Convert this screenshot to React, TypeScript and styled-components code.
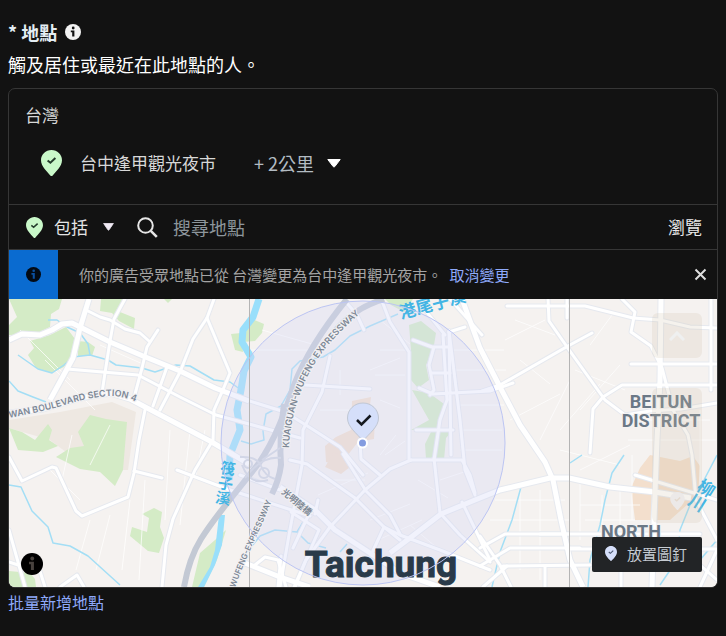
import React, { useState } from "react";
import styled, { createGlobalStyle } from "styled-components";

const GlobalStyle = createGlobalStyle`
  * { box-sizing: border-box; }
  body {
    margin: 0;
    background: #121212;
    color: #f2f2f2;
    font-family: "Noto Sans CJK TC", "Noto Sans", sans-serif;
    font-size: 18px;
    line-height: 24px;
  }
  button, input, select {
    font: inherit;
    color: inherit;
    background: none;
    border: 0;
    padding: 0;
    margin: 0;
  }
  button, select { cursor: pointer; }
  svg { display: block; flex: none; }
`;

const Page = styled.main`
  padding: 20px 8px 24px;
`;

const Heading = styled.h2`
  display: flex;
  align-items: center;
  gap: 8px;
  margin: 0;
  font-size: 18px;
  line-height: 24px;
  font-weight: 700;
  color: #e4edf3;
`;

const Description = styled.p`
  margin: 8px 0 12px;
  font-size: 18px;
  line-height: 24px;
  color: #fff;
`;

const Card = styled.section`
  border: 1px solid #363636;
  border-radius: 7px;
  overflow: hidden;
`;

const Places = styled.div`
  padding: 14px 16px 28px;
`;

const Country = styled.h3`
  margin: 0 0 23px;
  font-size: 17px;
  line-height: 24px;
  font-weight: 400;
  color: #d8d8d8;
`;

const Place = styled.div`
  display: flex;
  align-items: center;
  padding-left: 16px;
`;

const PlaceName = styled.span`
  margin: 0 38px 0 18px;
  font-size: 17px;
  color: #d8d8d8;
`;

const SelectBox = styled.span<{ $gap: number }>`
  display: inline-flex;
  align-items: center;
  gap: ${(p) => p.$gap}px;
`;

const Select = styled.select<{ $tone: string; $size: number }>`
  appearance: none;
  field-sizing: content;
  height: 24px;
  font-size: ${(p) => p.$size}px;
  line-height: 24px;
  color: ${(p) => p.$tone};
`;

const SearchRow = styled.div`
  display: flex;
  align-items: center;
  height: 46px;
  padding: 0 15px 0 17px;
  border-top: 1px solid #363636;
  border-bottom: 1px solid #363636;
`;

const Include = styled.div`
  display: flex;
  align-items: center;
  gap: 11px;
  margin-right: 23px;
`;

const SearchLabel = styled.label`
  display: flex;
  flex: 1;
  align-items: center;
  gap: 15px;
  min-width: 0;
`;

const SearchInput = styled.input`
  flex: 1;
  min-width: 0;
  height: 28px;
  outline: none;
  &::placeholder { color: #8d969c; opacity: 1; }
`;

const Browse = styled.button`
  font-size: 17px;
  color: #e8e8e8;
`;

const Notice = styled.div`
  display: flex;
  align-items: center;
  min-height: 49px;
  padding-right: 10px;
  font-size: 15px;
`;

const NoticeMark = styled.span`
  display: flex;
  align-items: center;
  justify-content: center;
  align-self: stretch;
  width: 49px;
  background: #0a6bd0;
`;

const NoticeText = styled.p`
  flex: 1;
  margin: 0 0 0 21px;
  color: #a4a4a4;
`;

const Undo = styled.button`
  margin-left: 7px;
  font-size: 15px;
  color: #8ea9fa;
`;

const MapFrame = styled.div`
  position: relative;
  height: 288px;
  overflow: hidden;
  background: #f5f2f0;
`;

const MapDrawing = styled.svg`
  width: 100%;
  height: 100%;
`;

const MapControls = styled.div`
  position: absolute;
  top: 14px;
  right: 15px;
  display: flex;
  flex-direction: column;
  gap: 30px;
`;

const ControlGroup = styled.div`
  display: flex;
  flex-direction: column;
  border-radius: 6px;
  overflow: hidden;
`;

const Control = styled.button`
  display: flex;
  align-items: center;
  justify-content: center;
  width: 50px;
  height: 45px;
  background: rgba(205, 190, 165, 0.2);
`;

const MapInfo = styled.button`
  position: absolute;
  left: 12px;
  bottom: 12px;
`;

const DropPin = styled.button`
  position: absolute;
  right: 15px;
  bottom: 15px;
  display: flex;
  align-items: center;
  gap: 10px;
  height: 35px;
  padding: 0 15px 2px 13px;
  border-radius: 2px;
  background: #222426;
  color: #c5cbd2;
  font-size: 15px;
`;

const BulkLink = styled.a`
  display: inline-block;
  margin-top: 2px;
  font-size: 16px;
  line-height: 24px;
  color: #8ea9fa;
  text-decoration: none;
`;

function InfoIcon({ size, disc, mark }: { size: number; disc: string; mark: string }) {
  return (
    <svg width={size} height={size} viewBox="0 0 16 16" aria-hidden="true">
      <circle cx="8" cy="8" r="8" fill={disc} />
      <circle cx="8.2" cy="4" r="1.4" fill={mark} />
      <path d="M5.800 6.400h3.600v6H7.200V8.200H5.800z" fill={mark} />
    </svg>
  );
}

function PinIcon({ width, fill, mark }: { width: number; fill: string; mark: string }) {
  return (
    <svg width={width} height={Math.round(width * 1.22)} viewBox="0 0 21 26" aria-hidden="true">
      <path d="M10.5 0C4.700 0 0 4.500 0 10.200c0 6.200 6.200 11.300 9.300 15.200a1.500 1.500 0 0 0 2.400 0C14.800 21.500 21 16.400 21 10.200 21 4.500 16.300 0 10.500 0z" fill={fill} />
      <path d="M6.600 10.400l2.800 2.300 5-4.600" fill="none" stroke={mark} strokeWidth="2" />
    </svg>
  );
}

function Caret({ width, height, color }: { width: number; height: number; color: string }) {
  return (
    <svg width={width} height={height} viewBox="0 0 14 9" preserveAspectRatio="none" aria-hidden="true">
      <path d="M.8.500h12.400L7.800 7.600q-.8.900-1.600 0z" fill={color} stroke={color} strokeLinejoin="round" />
    </svg>
  );
}

const parks = [
  "M9 299H62L59 309 51 314 50 327 42 331 37 334 9 335 9 325 17 317Z",
  "M101 299H122L120 312 135 318 134 329 119 321 112 313 100 311Z",
  "M30 341L50 335 66 327 75 339 73 355 64 367 51 373 36 368 28 355 34 348Z",
  "M78 341L88 342 95 347 92 356 78 356Z",
  "M9 428L22 432 35 440 48 424 52 430 49 440 58 446 43 452 18 450Z",
  "M90 415L106 419 127 422 123 470 115 486 100 472 80 469 56 457 70 448 84 446 78 432Z",
  "M154 508L162 512 160 527 164 538 159 553 148 551 130 536 132 527 147 532 149 518 142 514Z",
  "M231 334L241 333 243 352 235 350Z",
  "M250 318L264 324 262 333 255 341 243 342Z",
  "M409 325L421 321 436 333 433 351 426 365 429 380 418 388 411 380 411 350Z",
  "M412 390L429 393 444 404 443 418 436 429 454 429 446 438 444 460 426 459 425 444 432 430 411 430 429 420Z",
  "M385 299H413L404 312 391 305Z",
  "M215 540L226 530 217 560 204 587H192L200 553Z",
  "M9 571L30 573 35 579 36 587H9Z",
  "M164 299h8l-4 4z",
];

const warmAreas = [
  "M352 401L371 397 369 413 375 419 374 439 358 442 340 465 326 462 325 446 336 437 351 430Z",
  "M334 452L354 464 341 474 325 467Z",
  "M650 455L680 461 693 456 700 466 698 495 670 520 635 520 631 488 640 468Z",
];

const streams = [
  "M48 320L57 320 67 327 80 333 88 344 90 355",
  "M18 355L38 369 52 373 64 365 73 357 90 355 108 360 116 365 142 368 155 372 176 365 190 366 214 380 230 382 241 390",
  "M9 381L18 391 33 397 46 402",
  "M9 485L21 487 32 511 48 527 53 543 70 546 88 556 120 585",
  "M398 314L370 326 350 336 335 350 323 357 300 361 292 369 290 390 281 406 266 414 263 431 264 440 251 444 241 441",
  "M248 551L260 536 275 530 297 532 308 543 326 548",
  "M308 514L297 532M347 544L340 552",
  "M570 463L582 455M624 455L612 473 605 500 600 525 590 560 588 587",
  "M521 487L512 520 500 552 492 587",
  "M717 455L704 480 690 505 680 530 677 560 660 585",
  "M717 540L700 560",
];

const minorRoads = [
  "M88 311L100 317 110 320 125 329 140 333 149 341",
  "M125 299L114 319 110 341 105 373 102 393",
  "M158 330L147 347 142 368 134 398",
  "M67 369L138 375 180 397 216 415 249 424 300 438",
  "M214 299L207 318 193 339 180 372 160 410",
  "M207 318L230 373 222 392 214 410 213 440 195 470 173 519 166 545 162 587",
  "M167 367L153 406M145 410L139 440 134 473 128 497 82 516 76 511 56 468 52 467 22 481 9 457",
  "M134 471L162 478M177 470L227 489 310 516",
  "M9 530L25 587M9 562L24 567M60 587L77 575 84 587M38 565L45 587",
  "M240 398L285 412 309 427 340 447 363 475",
  "M305 385L370 389M330 356L322 392 303 430 302 465 289 535 280 587",
  "M346 302L357 315 364 330M382 301L390 322 409 352 409 459",
  "M413 340L432 347 449 347M434 347L429 365 434 390 430 395",
  "M419 388L433 394 490 391 513 383M449 331L451 455M443 335L447 400 440 420 434 460",
  "M431 373H450M416 430H453",
  "M449 331L460 420 465 470 475 495",
  "M425 310L445 335M449 332L465 327",
  "M450 299L482 335",
  "M290 460L307 464 355 498 384 527 400 535 440 550 490 570",
  "M343 454L356 475 366 491 390 515 400 534",
  "M360 440L361 459 380 475",
  "M411 460H462L470 475 475 493",
  "M411 460L390 469 365 490 330 527 306 560 295 587",
  "M400 540L384 527 371 555M434 458L440 513 460 535 490 562",
  "M462 502L490 560",
  "M291 512L319 530 294 587M318 500L315 514M281 556L278 587",
  "M240 475L280 490M309 514L293 548",
  "M255 565L265 557 278 560 286 587",
  "M507 306H585L633 318 660 320 690 327 717 328",
  "M548 299L549 321 572 354 605 400 625 415 650 411 681 409 717 403",
  "M567 299V318M592 333L568 346 500 385 482 391",
  "M631 364H717M717 385H622L603 397 593 409 590 453",
  "M622 299L635 312 631 332 651 346 662 368 673 410 688 435 692 455 696 500 717 540",
  "M540 534H700M569 549H717M503 566L590 565M635 475L717 500",
  "M545 566V587M621 565V587M711 299V390",
  "M480 536L500 565 511 587M480 548L505 534 569 534",
  "M480 566L510 548H580M483 587L507 566",
  "M700 587L717 550M700 565L717 580",
];

const mainRoads = [
  "M9 340L22 334 40 335 52 330 62 324 72 323 110 342 143 356 180 371 215 388 249 401",
  "M89 299L80 328 73 358 50 400",
  "M9 413L43 409 80 398 110 393 130 399 168 419 210 441 249 464",
  "M280 487L315 510 335 530 370 553 400 573 440 587",
  "M390 553L410 538 441 514 475 500 500 490 550 478 569 478 610 487 655 492 691 498",
  "M462 299L480 348 500 387 520 425 545 462 553 480 561 520 570 560 583 587",
  "M661 299L660 380 657 440 654 520 652 587",
  "M245 563L280 577 310 587",
];

const fineStreets = [
  "M250 350h70M262 330l50 14M370 370l30-12M320 410h36l8 18M385 455l20-14M370 520l40-16M418 480l30 18M340 370v25M380 400l20 8M396 435l-16 20",
  "M580 410l40-45M560 430l40-46M540 440l30-60M510 420l50-26M590 345l25-34M575 370l50 20M630 420h80M628 440h88M632 455v65M700 410v90",
  "M495 500h70M490 520h80M520 490v80M540 490v90M580 505h60M585 520h50M580 480v60M602 495v50M620 490v60M580 470l50-25M560 450l60 15",
  "M20 330l50 50M45 360l50 50M100 345l45 20M50 470l30 30M72 435l-10 45M110 425l-20 40M170 430l-5 90M190 430l-10 95M110 515l-14 55M90 520l-14 50M130 500l-8 70M145 480l-6 100M205 430l-10 50",
  "M380 320l30 24M380 350h28M375 375h30M454 350h50M456 370h50M456 405h48M460 430h42M460 450h42",
  "M325 480h40M318 495l50-22M378 540l44-20M410 525l26 22M440 480l30-10M515 320l40 15M505 340l40-20M520 360l30 24",
];

function CityMap() {
  return (
    <MapDrawing viewBox="9 299 708 288" preserveAspectRatio="xMidYMid slice" role="img" aria-label="Taichung">
      <defs>
        <path id="boulevard" d="M9 418Q35 413 55 408 88 397 110 396 125 396 143 405" />
        <path id="expressway-north" d="M289 448C291 405 308 370 325 349Q343 327 366 309" />
        <path id="expressway-south" d="M235 588C248 550 266 520 276 488" />
      </defs>
      <rect x="9" y="299" width="708" height="288" fill="#f5f2f0" />
      <path d="M9 420L60 412 112 402 136 412 128 470 90 470 50 440 9 428Z" fill="#eee8e2" />
      <g fill="#d4ebc6">{parks.map((d) => <path key={d} d={d} />)}</g>
      <g fill="#f3dfcd">{warmAreas.map((d) => <path key={d} d={d} />)}</g>
      <g fill="none" stroke="#fff" strokeWidth="1" opacity="0.75">
        {fineStreets.map((d) => <path key={d} d={d} />)}
      </g>
      <g fill="none" stroke="#a3def5" strokeWidth="1.5" strokeLinejoin="round">
        {streams.map((d) => <path key={d} d={d} />)}
      </g>
      <path d="M259 299L253 317 243 330 242 342 251 357 244 371 241 390 237 410 240 430 230 455 229 480" fill="none" stroke="#99dffb" strokeWidth="7" strokeLinejoin="round" />
      <path d="M219 515H225L222 545 215 565 204 587H198L210 567 215 550Z" fill="#99dffb" />
      <g fill="none" stroke="#e6e9ef" strokeWidth="5" strokeLinejoin="round" strokeLinecap="round">
        {minorRoads.map((d) => <path key={d} d={d} />)}
      </g>
      <g fill="none" stroke="#e6e9ef" strokeWidth="7" strokeLinejoin="round">
        {mainRoads.map((d) => <path key={d} d={d} />)}
      </g>
      <g fill="none" stroke="#fff" strokeWidth="3" strokeLinejoin="round" strokeLinecap="round">
        {minorRoads.map((d) => <path key={d} d={d} />)}
      </g>
      <g fill="none" stroke="#fff" strokeWidth="5" strokeLinejoin="round">
        {mainRoads.map((d) => <path key={d} d={d} />)}
      </g>
      <g fill="none" stroke="#c3c9d4" strokeWidth="6" strokeLinejoin="round">
        <path d="M347 299C325 326 306 354 294 385 285 412 276 438 259 463 238 490 216 515 201 539 191 555 187 570 184 587" />
        <path d="M384 299C362 306 349 315 334 332" />
        <path d="M284 404Q279 440 281 465 279 480 272 494" />
      </g>
      <g fill="none" stroke="#d0d5df" strokeWidth="2">
        <path d="M240 457Q257 456 261 466T275 479M242 465Q250 486 268 480M262 460L280 448M245 478Q262 455 281 458" />
        <circle cx="264" cy="473" r="5" />
        <circle cx="248" cy="464" r="4" />
      </g>
      <circle cx="363" cy="443" r="142" fill="#d5daf5" fillOpacity="0.34" />
      <path d="M249.500 299V587M569.500 299V587" stroke="#b4b4b4" strokeWidth="1" />

      <g fontFamily='Inter, "Noto Sans CJK TC", sans-serif' fontWeight="600" fill="#7d8896" stroke="#f2f1f3" strokeWidth="2" paintOrder="stroke">
        <text fontSize="9"><textPath href="#boulevard">WAN BOULEVARD SECTION 4</textPath></text>
        <text fontSize="9"><textPath href="#expressway-north">KUAIGUAN-WUFENG EXPRESSWAY</textPath></text>
        <text fontSize="8"><textPath href="#expressway-south">WUFENG-EXPRESSWAY</textPath></text>
        <text fontSize="9" fontFamily='"Noto Sans CJK TC", sans-serif' transform="translate(281 493) rotate(40)">光明陸橋</text>
      </g>
      <g fontFamily='"Noto Sans CJK TC", sans-serif' fontWeight="700" fill="#43b5e4">
        <text fontSize="17" transform="translate(401 319) rotate(-15)">港尾子溪</text>
        <text fontSize="15" writingMode="vertical-rl" transform="translate(229 461) rotate(9)">筏子溪</text>
        <text fontSize="17" writingMode="vertical-rl" transform="translate(711 481) rotate(32)">柳川</text>
      </g>
      <text x="381" y="577" textAnchor="middle" fontFamily="Roboto, sans-serif" fontWeight="700" fontSize="37" fill="#293a49" stroke="#293a49" strokeWidth="1">Taichung</text>
      <circle cx="363" cy="443" r="142" fill="none" stroke="#bcc5f3" strokeWidth="1" />

      <g fontFamily="Roboto, sans-serif" fontWeight="700" fontSize="18" textAnchor="middle" fill="#6b7886" stroke="#f5f3f3" strokeWidth="2" paintOrder="stroke">
        <text x="661" y="408">BEITUN</text>
        <text x="661" y="427">DISTRICT</text>
        <text x="631" y="538">NORTH</text>
      </g>

      <path d="M363 403c-8.500 0-15.500 6.500-15.500 15 0 9 9 15 15.500 23 6.500-8 15.500-14 15.500-23 0-8.500-7-15-15.500-15z" fill="#d5dffa" stroke="#c0c7d4" />
      <path d="M357 420l4.500 4.500 9-9" fill="none" stroke="#14181f" strokeWidth="2.500" />
      <circle cx="362.500" cy="443" r="4.500" fill="#849ce0" stroke="#fff" strokeWidth="2" />
    </MapDrawing>
  );
}

export default function App() {
  const [query, setQuery] = useState("");
  const [noticeOpen, setNoticeOpen] = useState(true);

  return (
    <>
      <GlobalStyle />
      <Page>
        <Heading>
          * 地點
          <InfoIcon size={16} disc="#f3f3f3" mark="#121212" />
        </Heading>
        <Description>觸及居住或最近在此地點的人。</Description>

        <Card>
          <Places>
            <Country>台灣</Country>
            <Place>
              <PinIcon width={21} fill="#c9f8c9" mark="#243c2c" />
              <PlaceName>台中逢甲觀光夜市</PlaceName>
              <SelectBox $gap={13}>
                <Select $tone="#b3bcc3" $size={18} aria-label="半徑" defaultValue="2">
                  <option value="2">+ 2公里</option>
                </Select>
                <Caret width={14} height={9} color="#fff" />
              </SelectBox>
            </Place>
          </Places>

          <SearchRow>
            <Include>
              <PinIcon width={17} fill="#c9f8c9" mark="#243c2c" />
              <SelectBox $gap={15}>
                <Select $tone="#e4e4e4" $size={17} aria-label="包括或排除" defaultValue="in">
                  <option value="in">包括</option>
                </Select>
                <Caret width={11} height={8} color="#f0eaf4" />
              </SelectBox>
            </Include>
            <SearchLabel>
              <svg width="21" height="21" viewBox="0 0 21 21" aria-hidden="true">
                <circle cx="8.500" cy="8.500" r="7.300" fill="none" stroke="#e6e6e6" strokeWidth="2" />
                <path d="M13.800 13.800l6 6" stroke="#e6e6e6" strokeWidth="2.600" />
              </svg>
              <SearchInput
                aria-label="搜尋地點"
                placeholder="搜尋地點"
                value={query}
                onChange={(e) => setQuery(e.target.value)}
              />
            </SearchLabel>
            <Browse type="button">瀏覽</Browse>
          </SearchRow>

          {noticeOpen && (
            <Notice role="status">
              <NoticeMark>
                <InfoIcon size={15} disc="#030a14" mark="#0a4fa0" />
              </NoticeMark>
              <NoticeText>
                你的廣告受眾地點已從 台灣變更為台中逢甲觀光夜市。
                <Undo type="button">取消變更</Undo>
              </NoticeText>
              <button type="button" aria-label="關閉" onClick={() => setNoticeOpen(false)}>
                <svg width="13" height="13" viewBox="0 0 13 13" aria-hidden="true">
                  <path d="M1.500 1.500l10 10M11.500 1.500l-10 10" stroke="#dedede" strokeWidth="2" />
                </svg>
              </button>
            </Notice>
          )}

          <MapFrame>
            <CityMap />
            <MapControls>
              <ControlGroup>
                <Control type="button" aria-label="向上">
                  <svg width="16" height="10" viewBox="0 0 16 10" aria-hidden="true">
                    <path d="M1 9l7-7 7 7" fill="none" stroke="#eff0f0" strokeWidth="3" />
                  </svg>
                </Control>
              </ControlGroup>
              <ControlGroup>
                <Control type="button" aria-label="放大" />
                <Control type="button" aria-label="縮小" />
                <Control type="button" aria-label="定位">
                  <PinIcon width={15} fill="#ece9e8" mark="#e4d9cd" />
                </Control>
              </ControlGroup>
            </MapControls>
            <MapInfo type="button" aria-label="地圖資訊">
              <InfoIcon size={22} disc="#000" mark="#48423e" />
            </MapInfo>
            <DropPin type="button">
              <PinIcon width={12} fill="#d5dffa" mark="#4a5670" />
              放置圖釘
            </DropPin>
          </MapFrame>
        </Card>

        <BulkLink href="#bulk">批量新增地點</BulkLink>
      </Page>
    </>
  );
}
